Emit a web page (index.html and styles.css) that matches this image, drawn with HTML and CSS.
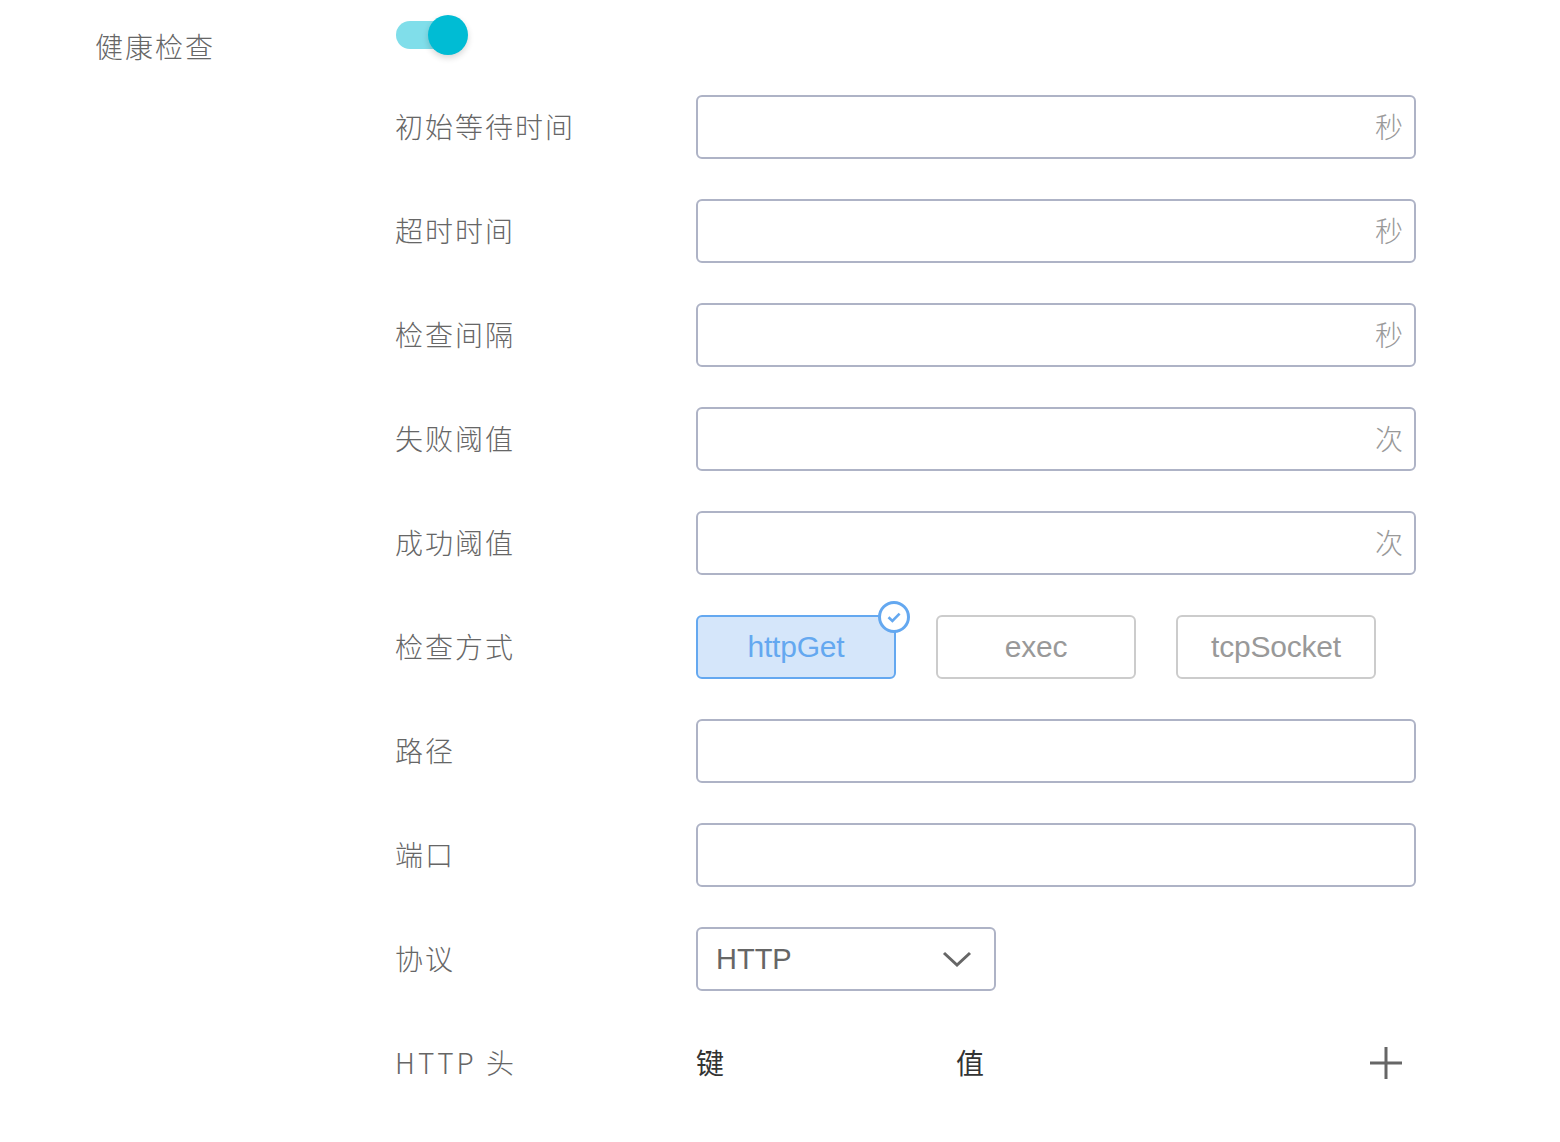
FILE: index.html
```html
<!DOCTYPE html>
<html lang="zh-CN">
<head>
<meta charset="utf-8">
<title>健康检查</title>
<link rel="stylesheet" href="styles.css">
</head>
<body>
<main class="section">
  <div class="section-label">健康检查</div>
  <div class="section-body">
    <div class="switch-row">
      <div class="switch"><span class="switch-knob"></span></div>
    </div>
    <div class="row"><label class="label">初始等待时间</label><div class="input"><span class="unit">秒</span></div></div>
    <div class="row"><label class="label">超时时间</label><div class="input"><span class="unit">秒</span></div></div>
    <div class="row"><label class="label">检查间隔</label><div class="input"><span class="unit">秒</span></div></div>
    <div class="row"><label class="label">失败阈值</label><div class="input"><span class="unit">次</span></div></div>
    <div class="row"><label class="label">成功阈值</label><div class="input"><span class="unit">次</span></div></div>
    <div class="row">
      <label class="label">检查方式</label>
      <div class="options">
        <div class="option option-active">httpGet
          <span class="option-badge">
            <svg class="check" viewBox="0 0 16 16" width="16" height="16"><path d="M2.5 8.2 6.4 12 13.6 4.6" fill="none" stroke="#64a8f0" stroke-width="2.6"/></svg>
          </span>
        </div>
        <div class="option">exec</div>
        <div class="option">tcpSocket</div>
      </div>
    </div>
    <div class="row"><label class="label">路径</label><div class="input"></div></div>
    <div class="row"><label class="label">端口</label><div class="input"></div></div>
    <div class="row">
      <label class="label">协议</label>
      <div class="select">HTTP
        <svg class="chevron" viewBox="0 0 30 18" width="30" height="18"><path d="M2 3 15 15 28 3" fill="none" stroke="#666" stroke-width="3"/></svg>
      </div>
    </div>
    <div class="row">
      <label class="label label-wide">HTTP 头</label>
      <div class="kv">
        <span class="kv-key">键</span>
        <span class="kv-value">值</span>
        <svg class="plus" viewBox="0 0 32 32" width="32" height="32"><path d="M16 0V32M0 16H32" fill="none" stroke="#666" stroke-width="3"/></svg>
      </div>
    </div>
  </div>
</main>
</body>
</html>
```
FILE: styles.css
```css
html, body {
  margin: 0;
  padding: 0;
  background: #fff;
  height: 100%;
  overflow: hidden;
}

body {
  font-family: "Noto Sans CJK SC", "Liberation Sans", sans-serif;
  font-weight: 300;
  color: #666;
}

.section {
  display: flex;
  padding-top: 15px;
}

.section-label {
  width: 396px;
  flex: none;
  padding-left: 95px;
  box-sizing: border-box;
  font-size: 28px;
  letter-spacing: 2px;
  line-height: 62px;
  height: 64px;
}

.section-body {
  width: 1020px;
}

.switch-row {
  height: 40px;
  margin-bottom: 40px;
}

.switch {
  position: relative;
  width: 64px;
  height: 28px;
  top: 6px;
  border-radius: 14px;
  background: #80deea;
}

.switch-knob {
  position: absolute;
  right: -8px;
  top: -6px;
  width: 40px;
  height: 40px;
  border-radius: 50%;
  background: #00bcd4;
  box-shadow: 0 3px 6px rgba(0, 0, 0, 0.16);
}

.row {
  display: flex;
  align-items: center;
  height: 64px;
  margin-bottom: 40px;
}

.label {
  width: 301px;
  margin-left: -1px;
  padding-bottom: 2px;
  flex: none;
  font-size: 28px;
  letter-spacing: 2px;
  color: #666;
}

.label-wide {
  letter-spacing: 3px;
}

.input {
  display: flex;
  align-items: center;
  justify-content: flex-end;
  width: 720px;
  height: 64px;
  box-sizing: border-box;
  border: 2px solid #aeb3c6;
  border-radius: 6px;
  padding-right: 11px;
}

.unit {
  padding-bottom: 2px;
  font-size: 28px;
  color: #999;
}

.options {
  display: flex;
  gap: 40px;
}

.option {
  position: relative;
  display: flex;
  align-items: center;
  justify-content: center;
  width: 200px;
  height: 64px;
  box-sizing: border-box;
  border: 2px solid #ccc;
  border-radius: 6px;
  font-family: "Liberation Sans", sans-serif;
  font-weight: 400;
  font-size: 30px;
  letter-spacing: -0.2px;
  color: #999;
}

.option-active {
  background: #d5e6fa;
  border-color: #64a8f0;
  color: #64a8f0;
}

.option-badge {
  position: absolute;
  top: -16px;
  right: -16px;
  display: flex;
  align-items: center;
  justify-content: center;
  width: 32px;
  height: 32px;
  box-sizing: border-box;
  border: 3px solid #64a8f0;
  border-radius: 50%;
  background: #fff;
}

.select {
  display: flex;
  align-items: center;
  justify-content: space-between;
  width: 300px;
  height: 64px;
  box-sizing: border-box;
  border: 2px solid #aeb3c6;
  border-radius: 6px;
  padding: 0 22px 0 18px;
  font-family: "Liberation Sans", sans-serif;
  font-weight: 400;
  font-size: 29px;
  color: #666;
}

.kv {
  display: flex;
  align-items: center;
  width: 720px;
  font-size: 28px;
  font-weight: 400;
  color: #333;
}

.kv-key {
  width: 260px;
  padding-bottom: 2px;
}

.kv-value {
  flex: 1;
  padding-bottom: 2px;
}

.plus {
  margin-right: 14px;
}
```
